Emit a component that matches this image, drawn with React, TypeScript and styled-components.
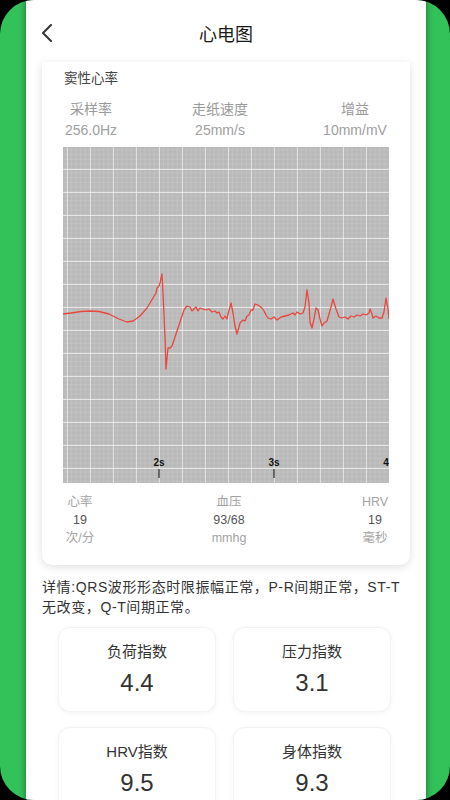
import styled, { createGlobalStyle } from 'styled-components';

const GlobalStyle = createGlobalStyle`
  html, body {
    margin: 0;
    padding: 0;
    background: #000;
  }
  body {
    font-family: "Liberation Sans", "Noto Sans CJK SC", sans-serif;
  }
`;

const Frame = styled.div`
  width: 450px;
  height: 800px;
  background: #33c25a;
  border-radius: 34px;
  display: flex;
  overflow: hidden;
`;

const Screen = styled.main`
  width: 400px;
  height: 800px;
  margin-left: 26px;
  background: #fff;
  box-shadow: 0 0 7px rgba(0, 0, 0, 0.45);
  display: flex;
  flex-direction: column;
  overflow: hidden;
`;

const Header = styled.header`
  height: 62px;
  display: grid;
  grid-template-columns: 40px 1fr 40px;
  align-items: center;
  flex-shrink: 0;
`;

const BackButton = styled.button`
  border: none;
  background: none;
  padding: 4px 0 0 14px;
  display: flex;
  align-items: center;
  height: 30px;
  cursor: pointer;
`;

const Title = styled.h1`
  margin: 0;
  text-align: center;
  font-size: 18px;
  font-weight: 400;
  color: #1a1a1a;
  padding-top: 4px;
`;

const Content = styled.div`
  padding: 0 16px;
  display: flex;
  flex-direction: column;
`;

const EcgCard = styled.section`
  background: #fff;
  border-radius: 0 0 10px 10px;
  box-shadow: 0 2px 8px rgba(0, 0, 0, 0.13);
  padding: 8px 21px 18px;
  display: flex;
  flex-direction: column;
`;

const Rhythm = styled.div`
  font-size: 13.5px;
  color: #444;
  line-height: 18px;
  padding-left: 1px;
`;

const InfoRow = styled.div<{ $top: number }>`
  display: flex;
  justify-content: space-between;
  margin-top: ${(p) => p.$top}px;
`;

const InfoCol = styled.div<{ $width: number }>`
  width: ${(p) => p.$width}px;
  display: flex;
  flex-direction: column;
  align-items: center;
  white-space: nowrap;
`;

const ParamLabel = styled.span`
  font-size: 14px;
  line-height: 21px;
  color: #9a9a9a;
`;

const ParamValue = styled.span`
  font-size: 14px;
  line-height: 21px;
  color: #a0a0a0;
`;

const StatLabel = styled.span`
  font-size: 12.5px;
  line-height: 18px;
  color: #a3a3a3;
`;

const StatValue = styled.span`
  font-size: 12.5px;
  line-height: 18px;
  color: #555;
`;

const ChartBox = styled.div`
  margin-top: 6px;
  width: 326px;
  height: 336px;
  svg {
    display: block;
  }
`;

const Detail = styled.p`
  margin: 12px 0 0;
  font-size: 14px;
  line-height: 20px;
  color: #333;
  letter-spacing: 0.6px;
`;

const MetricGrid = styled.div`
  display: grid;
  grid-template-columns: 158px 158px;
  column-gap: 17px;
  row-gap: 15px;
  padding: 0 32px;
  margin-top: 10px;
`;

const MetricCard = styled.div`
  height: 85px;
  border-radius: 12px;
  background: #fff;
  border: 1px solid #f3f3f3;
  box-shadow: 0 1px 5px rgba(0, 0, 0, 0.05);
  display: flex;
  flex-direction: column;
  align-items: center;
  box-sizing: border-box;
  padding-top: 13px;
`;

const MetricLabel = styled.span`
  font-size: 15px;
  line-height: 22px;
  color: #333;
`;

const MetricValue = styled.span`
  font-size: 24px;
  line-height: 30px;
  margin-top: 5px;
  color: #333;
`;

const tracePoints: [number, number][] = [
  [0, 167], [8, 166], [18, 164.5], [27, 164], [36, 164.5], [46, 167], [56, 172], [64, 175],
  [70, 174], [77, 169], [84, 161], [90, 151], [93, 146], [94, 141], [96, 139], [97, 136],
  [99, 127], [100, 146], [102, 190], [103, 222], [105, 201], [107, 201], [109, 199], [112, 190],
  [115, 181], [118, 172], [121, 163], [124, 159], [127, 160], [129, 164], [131, 162], [133, 160],
  [135, 164], [137, 161], [140, 162], [143, 163], [146, 162], [149, 165], [152, 164], [154, 166],
  [156, 165], [158, 170], [160, 172], [162, 169], [164, 172], [165, 167], [167, 160], [168, 156],
  [170, 166], [172, 179], [174, 187], [176, 180], [177, 176], [180, 173], [182, 174], [184, 169],
  [186, 168], [188, 163], [190, 163], [192, 157], [195, 158], [199, 161], [201, 164], [203, 168],
  [205, 171], [208, 172], [211, 170], [214, 173], [218, 170], [222, 169], [226, 168], [230, 166],
  [232, 168], [234, 165], [237, 167], [240, 166], [242, 160], [244, 143], [246, 156], [247, 175],
  [249, 181], [251, 172], [253, 161], [255, 163], [257, 172], [259, 179], [261, 176], [264, 174],
  [266, 167], [268, 160], [270, 152], [273, 162], [276, 170], [279, 171], [282, 170], [285, 172],
  [288, 169], [291, 170], [294, 168], [297, 169], [300, 167], [303, 168], [306, 166], [307, 162],
  [309, 167], [310, 171], [313, 169], [316, 171], [319, 171], [321, 165], [323, 151], [325, 162],
  [326, 172],
];

const tracePath = tracePoints
  .map(([x, y], i) => `${i === 0 ? 'M' : 'L'}${x} ${y}`)
  .join(' ');

function BackIcon() {
  return (
    <svg width="14" height="20" viewBox="0 0 14 20" aria-hidden>
      <polyline
        points="11,2 3,10 11,18"
        fill="none"
        stroke="#333"
        strokeWidth="2"
        strokeLinecap="round"
        strokeLinejoin="round"
      />
    </svg>
  );
}

function EcgChart() {
  return (
    <svg width="326" height="336" viewBox="0 0 326 336" aria-hidden>
      <defs>
        <pattern id="minor" x="4" y="22" width="4.6" height="4.6" patternUnits="userSpaceOnUse">
          <path d="M0 0 H4.6 M0 0 V4.6" stroke="#d0d0d0" strokeWidth="0.6" fill="none" />
        </pattern>
        <pattern id="major" x="4" y="22" width="23" height="23" patternUnits="userSpaceOnUse">
          <rect width="23" height="23" fill="url(#minor)" />
          <path d="M0 0 H23 M0 0 V23" stroke="#f3f3f3" strokeWidth="1.3" fill="none" />
        </pattern>
      </defs>
      <rect width="326" height="336" fill="#b9b9b9" />
      <rect width="326" height="336" fill="url(#major)" />
      <path d={tracePath} fill="none" stroke="#e8463e" strokeWidth="1.3" strokeLinejoin="round" />
      <g fontFamily="Liberation Sans, sans-serif" fontSize="10" fontWeight="700" fill="#111">
        <text x="96" y="319" textAnchor="middle">2s</text>
        <text x="211" y="319" textAnchor="middle">3s</text>
        <text x="323" y="319" textAnchor="middle">4</text>
      </g>
      <g stroke="#222" strokeWidth="1.2">
        <line x1="96" y1="322" x2="96" y2="331" />
        <line x1="211" y1="322" x2="211" y2="331" />
      </g>
    </svg>
  );
}

const metrics = [
  { label: '负荷指数', value: '4.4' },
  { label: '压力指数', value: '3.1' },
  { label: 'HRV指数', value: '9.5' },
  { label: '身体指数', value: '9.3' },
];

export default function App() {
  return (
    <>
      <GlobalStyle />
      <Frame>
        <Screen>
          <Header>
            <BackButton aria-label="返回">
              <BackIcon />
            </BackButton>
            <Title>心电图</Title>
            <div />
          </Header>

          <Content>
            <EcgCard>
              <Rhythm>窦性心率</Rhythm>
              <InfoRow $top={11}>
                <InfoCol $width={56}>
                  <ParamLabel>采样率</ParamLabel>
                  <ParamValue>256.0Hz</ParamValue>
                </InfoCol>
                <InfoCol $width={70}>
                  <ParamLabel>走纸速度</ParamLabel>
                  <ParamValue>25mm/s</ParamValue>
                </InfoCol>
                <InfoCol $width={68}>
                  <ParamLabel>增益</ParamLabel>
                  <ParamValue>10mm/mV</ParamValue>
                </InfoCol>
              </InfoRow>

              <ChartBox>
                <EcgChart />
              </ChartBox>

              <InfoRow $top={10}>
                <InfoCol $width={34}>
                  <StatLabel>心率</StatLabel>
                  <StatValue>19</StatValue>
                  <StatLabel>次/分</StatLabel>
                </InfoCol>
                <InfoCol $width={42}>
                  <StatLabel>血压</StatLabel>
                  <StatValue>93/68</StatValue>
                  <StatLabel>mmhg</StatLabel>
                </InfoCol>
                <InfoCol $width={28}>
                  <StatLabel>HRV</StatLabel>
                  <StatValue>19</StatValue>
                  <StatLabel>毫秒</StatLabel>
                </InfoCol>
              </InfoRow>
            </EcgCard>

            <Detail>
              详情:QRS波形形态时限振幅正常，P-R间期正常，ST-T无改变，Q-T间期正常。
            </Detail>
          </Content>

          <MetricGrid>
            {metrics.map((m) => (
              <MetricCard key={m.label}>
                <MetricLabel>{m.label}</MetricLabel>
                <MetricValue>{m.value}</MetricValue>
              </MetricCard>
            ))}
          </MetricGrid>
        </Screen>
      </Frame>
    </>
  );
}
